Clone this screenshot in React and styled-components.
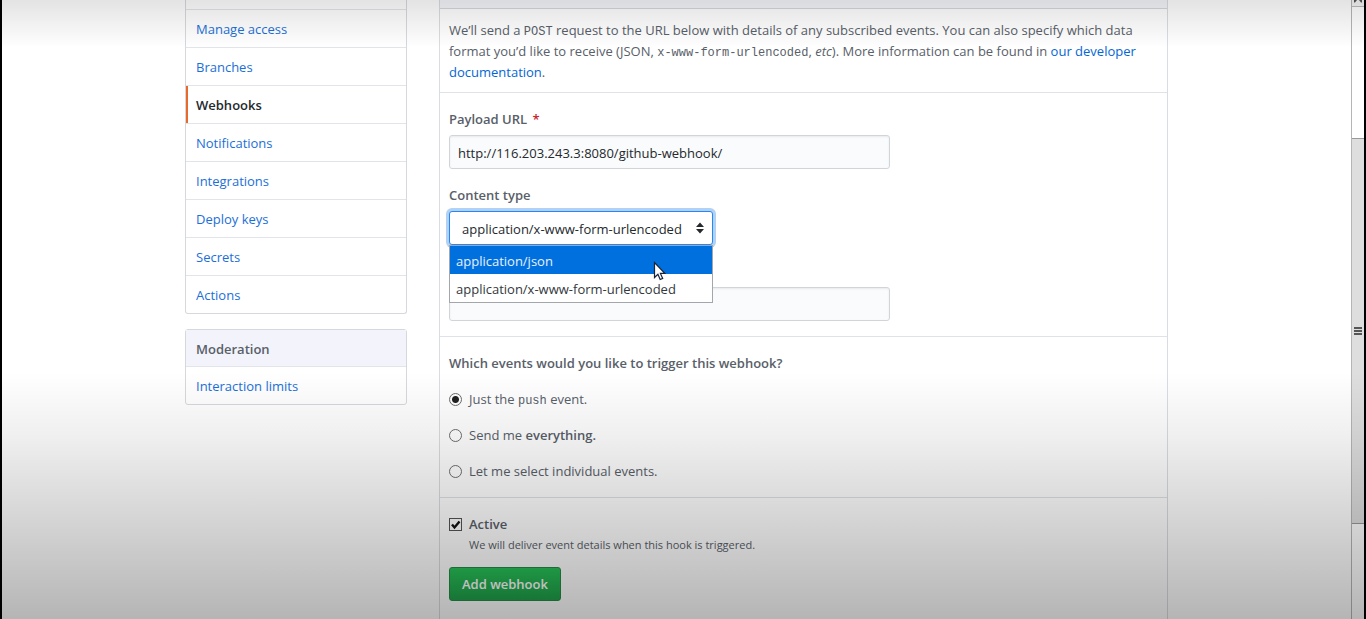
import React, { useState } from "react";
import styled, { createGlobalStyle } from "styled-components";

const GlobalStyle = createGlobalStyle`
  *, *::before, *::after { box-sizing: border-box; }
  body {
    margin: 0;
    background: #000;
    color: #586069;
    font-family: "Open Sans", "Noto Sans", sans-serif;
    font-size: 13px;
    line-height: 21px;
  }
  strong { font-weight: 600; }
`;

const Frame = styled.div`
  position: relative;
  display: flex;
  height: 100vh;
  padding: 0 2px;
  overflow: hidden;
`;

const Viewport = styled.div`
  flex: 1;
  min-width: 0;
  background: #fff;
`;

const Container = styled.div`
  display: flex;
  align-items: flex-start;
  gap: 32px;
  width: 100%;
  max-width: 983px;
  margin: 0 auto;
`;

const Sidebar = styled.aside`
  flex: 0 0 222px;
  display: flex;
  flex-direction: column;
  gap: 15px;
`;

const Menu = styled.nav`
  display: flex;
  flex-direction: column;
  border: 1px solid #d5d8dd;
  border-radius: 3px;
  ${(p) => p.$continued && "border-top: 0; border-radius: 0 0 3px 3px; padding-top: 9px;"}
`;

const MenuHeading = styled.h3`
  margin: 0;
  padding: 9px 10px 6px;
  height: 36px;
  background: #f3f4fb;
  font-size: 13px;
  font-weight: 600;
`;

const MenuLink = styled.a`
  display: flex;
  align-items: center;
  height: 38px;
  padding: 2px 10px 0;
  border-top: 1px solid #e1e4e8;
  color: ${(p) => (p.$current ? "#24292e" : "#1b6fd8")};
  font-weight: ${(p) => (p.$current ? 600 : 400)};
  box-shadow: ${(p) => (p.$current ? "inset 2px 0 #e8692c" : "none")};
  text-decoration: none;
`;

const Panel = styled.main`
  flex: 1;
  min-width: 0;
  height: 100vh;
  border: solid #d9dce0;
  border-width: 0 1px;
`;

const PanelTop = styled.div`
  height: 9px;
  background: #f4f6f9;
  border-bottom: 1px solid #d5d8dc;
`;

const Section = styled.section`
  padding: ${(p) => p.$pad || "16px 9px 15px"};
  border-bottom: ${(p) => (p.$last ? "0" : "1px solid #dfe2e6")};
`;

const Intro = styled.p`
  margin: 0;
`;

const Link = styled.a`
  color: #0366d6;
  text-decoration: none;
`;

const Code = styled.code`
  font-family: "Liberation Mono", monospace;
  font-size: 12px;
  line-height: 12px;
`;

const Field = styled.div`
  display: flex;
  flex-direction: column;
  align-items: flex-start;
  margin-bottom: 16px;
  &:last-child { margin-bottom: 0; }
`;

const Label = styled.label`
  margin-bottom: 5px;
  font-weight: 600;
`;

const Required = styled.span`
  margin-left: 2px;
  color: #cb2431;
`;

const TextInput = styled.input`
  width: 441px;
  max-width: 100%;
  height: 34px;
  padding: 2px 8px 0;
  border: 1px solid #d1d5da;
  border-radius: 3px;
  background: #fafbfc;
  box-shadow: inset 0 1px 2px rgba(27, 31, 35, 0.075);
  color: #24292e;
  font: inherit;
`;

const SelectBox = styled.div`
  position: relative;
  width: 264px;
`;

const Select = styled.select`
  display: block;
  width: 100%;
  height: 34px;
  padding: 2px 12px 0;
  appearance: none;
  border: 1px solid #2188ff;
  border-radius: 3px;
  outline: 0;
  background: #fff;
  box-shadow: 0 0 0 3px rgba(3, 102, 214, 0.3);
  color: #24292e;
  font: inherit;
`;

const Arrows = styled.svg`
  position: absolute;
  top: 11px;
  right: 9px;
  width: 8px;
  height: 12px;
  pointer-events: none;
`;

const Options = styled.ul`
  position: absolute;
  z-index: 1;
  top: 100%;
  left: 0;
  width: 100%;
  margin: 0;
  padding: 0;
  border: 1px solid #a3a6aa;
  background: #fff;
  list-style: none;
`;

const Option = styled.li`
  height: 28px;
  padding: 5px 6px 2px;
  background: ${(p) => (p.$active ? "#0070de" : "#fff")};
  color: ${(p) => (p.$active ? "#e8f1fc" : "#33383d")};
`;

const Pointer = styled.svg`
  position: absolute;
  z-index: 2;
  top: 50px;
  left: 204px;
  width: 13px;
  height: 20px;
`;

const Choices = styled.fieldset`
  display: flex;
  flex-direction: column;
  gap: 15px;
  margin: 0;
  padding: 0;
  border: 0;
`;

const Legend = styled.legend`
  margin-bottom: 15px;
  padding: 0;
  font-weight: 600;
`;

const Choice = styled.label`
  display: flex;
  align-items: center;
  gap: 7px;
  font-weight: ${(p) => (p.$strong ? 600 : 400)};
`;

const Radio = styled.input`
  appearance: none;
  width: 13px;
  height: 13px;
  margin: 0;
  border: 1px solid #6d6d6d;
  border-radius: 50%;
  background: #fff;
  &:checked { background: radial-gradient(circle, #222 0 3px, #fff 4px); }
`;

const CheckWrap = styled.span`
  position: relative;
  display: flex;
`;

const Checkbox = styled.input`
  appearance: none;
  width: 13px;
  height: 13px;
  margin: 0;
  border: 1px solid #555;
  background: #fff;
  &:not(:checked) + svg { display: none; }
`;

const Tick = styled.svg`
  position: absolute;
  inset: 0;
  width: 13px;
  height: 13px;
  pointer-events: none;
`;

const Note = styled.p`
  margin: 0 0 13px;
  padding-left: 20px;
  font-size: 11px;
  line-height: 19px;
`;

const SubmitButton = styled.button`
  height: 34px;
  padding: 0 12px;
  border: 1px solid #258b45;
  border-radius: 3px;
  background: linear-gradient(#28c358, #20a049);
  color: #fff;
  font: inherit;
  font-weight: 600;
`;

const ScrollBar = styled.div`
  flex: 0 0 13px;
  display: flex;
  flex-direction: column;
  border-left: 1px solid #b5b5b5;
  background: #fff;
`;

const ScrollUp = styled.div`
  flex: 0 0 7px;
  display: flex;
  justify-content: center;
  border-bottom: 1px solid #bbb;
  background: #f4f4f4;
`;

const ScrollGap = styled.div`
  flex: ${(p) => p.$share} 0 0;
`;

const ScrollThumb = styled.div`
  flex: 386 0 0;
  display: flex;
  align-items: center;
  justify-content: center;
  border: solid #999;
  border-width: 1px 0;
  background: #dedede;
`;

const Shade = styled.div`
  position: absolute;
  z-index: 5;
  inset: 0 2px;
  pointer-events: none;
  background:
    linear-gradient(rgba(0, 0, 0, 0.11), transparent 48px),
    linear-gradient(transparent 60%, rgba(0, 0, 0, 0.06) 70%, rgba(0, 0, 0, 0.29));
`;

const pages = [
  "Manage access",
  "Branches",
  "Webhooks",
  "Notifications",
  "Integrations",
  "Deploy keys",
  "Secrets",
  "Actions",
];

const types = ["application/json", "application/x-www-form-urlencoded"];

const triggers = [
  { id: "push", text: <>Just the <Code>push</Code> event.</> },
  { id: "all", text: <>Send me <strong>everything.</strong></> },
  { id: "custom", text: "Let me select individual events." },
];

export default function App() {
  const [url, setUrl] = useState("http://116.203.243.3:8080/github-webhook/");
  const [type, setType] = useState(types[1]);
  const [trigger, setTrigger] = useState("push");
  const [active, setActive] = useState(true);

  return (
    <Frame>
      <GlobalStyle />
      <Viewport>
        <Container>
          <Sidebar>
            <Menu $continued>
              {pages.map((page) => (
                <MenuLink key={page} href="#" $current={page === "Webhooks"}>
                  {page}
                </MenuLink>
              ))}
            </Menu>
            <Menu>
              <MenuHeading>Moderation</MenuHeading>
              <MenuLink href="#">Interaction limits</MenuLink>
            </Menu>
          </Sidebar>
          <Panel>
            <PanelTop />
            <Section $pad="11px 9px 9px">
              <Intro>
                We’ll send a <Code>POST</Code> request to the URL below with details of any
                subscribed events. You can also specify which data format you’d like to receive
                (JSON, <Code>x-www-form-urlencoded</Code>, <em>etc</em>). More information can be
                found in <Link href="#">our developer documentation</Link>.
              </Intro>
            </Section>
            <Section>
              <Field>
                <Label htmlFor="payload">
                  Payload URL <Required>*</Required>
                </Label>
                <TextInput id="payload" value={url} onChange={(e) => setUrl(e.target.value)} />
              </Field>
              <Field>
                <Label htmlFor="type">Content type</Label>
                <SelectBox>
                  <Select id="type" value={type} onChange={(e) => setType(e.target.value)}>
                    {types.map((t) => (
                      <option key={t}>{t}</option>
                    ))}
                  </Select>
                  <Arrows viewBox="0 0 8 12" aria-hidden="true">
                    <path d="M4 0.5 8 5H0zM4 11.5 0 7h8z" fill="#24292e" />
                  </Arrows>
                  <Options>
                    {types.map((t, i) => (
                      <Option key={t} $active={i === 0} onClick={() => setType(t)}>
                        {t}
                      </Option>
                    ))}
                  </Options>
                  <Pointer viewBox="0 0 13 20" aria-hidden="true">
                    <path
                      d="M1.5 1.5v15l3.4-3.2 2.3 5.2 2.5-1.1-2.3-5h4.4z"
                      fill="#fff"
                      stroke="#17243a"
                      strokeWidth="1.2"
                    />
                  </Pointer>
                </SelectBox>
              </Field>
              <Field>
                <Label htmlFor="secret">Secret</Label>
                <TextInput id="secret" />
              </Field>
            </Section>
            <Section>
              <Choices>
                <Legend>Which events would you like to trigger this webhook?</Legend>
                {triggers.map((t) => (
                  <Choice key={t.id}>
                    <Radio
                      type="radio"
                      name="trigger"
                      checked={trigger === t.id}
                      onChange={() => setTrigger(t.id)}
                    />
                    <span>{t.text}</span>
                  </Choice>
                ))}
              </Choices>
            </Section>
            <Section $last>
              <Choice $strong>
                <CheckWrap>
                  <Checkbox
                    type="checkbox"
                    checked={active}
                    onChange={(e) => setActive(e.target.checked)}
                  />
                  <Tick viewBox="0 0 13 13" aria-hidden="true">
                    <path d="M3 6.5 5.5 9.5 10.5 3.5" fill="none" stroke="#111" strokeWidth="2.4" />
                  </Tick>
                </CheckWrap>
                Active
              </Choice>
              <Note>We will deliver event details when this hook is triggered.</Note>
              <SubmitButton type="button">Add webhook</SubmitButton>
            </Section>
          </Panel>
        </Container>
      </Viewport>
      <ScrollBar aria-hidden="true">
        <ScrollUp>
          <svg width="8" height="3" viewBox="0 0 8 3">
            <path d="M0 0h3L1 2.5H0zM5 0h3v2.5H7z" fill="#555" />
          </svg>
        </ScrollUp>
        <ScrollGap $share={131} />
        <ScrollThumb>
          <svg width="8" height="8" viewBox="0 0 8 8">
            <path d="M0 1h8M0 4h8M0 7h8" stroke="#555" strokeWidth="2" />
          </svg>
        </ScrollThumb>
        <ScrollGap $share={95} />
      </ScrollBar>
      <Shade />
    </Frame>
  );
}
